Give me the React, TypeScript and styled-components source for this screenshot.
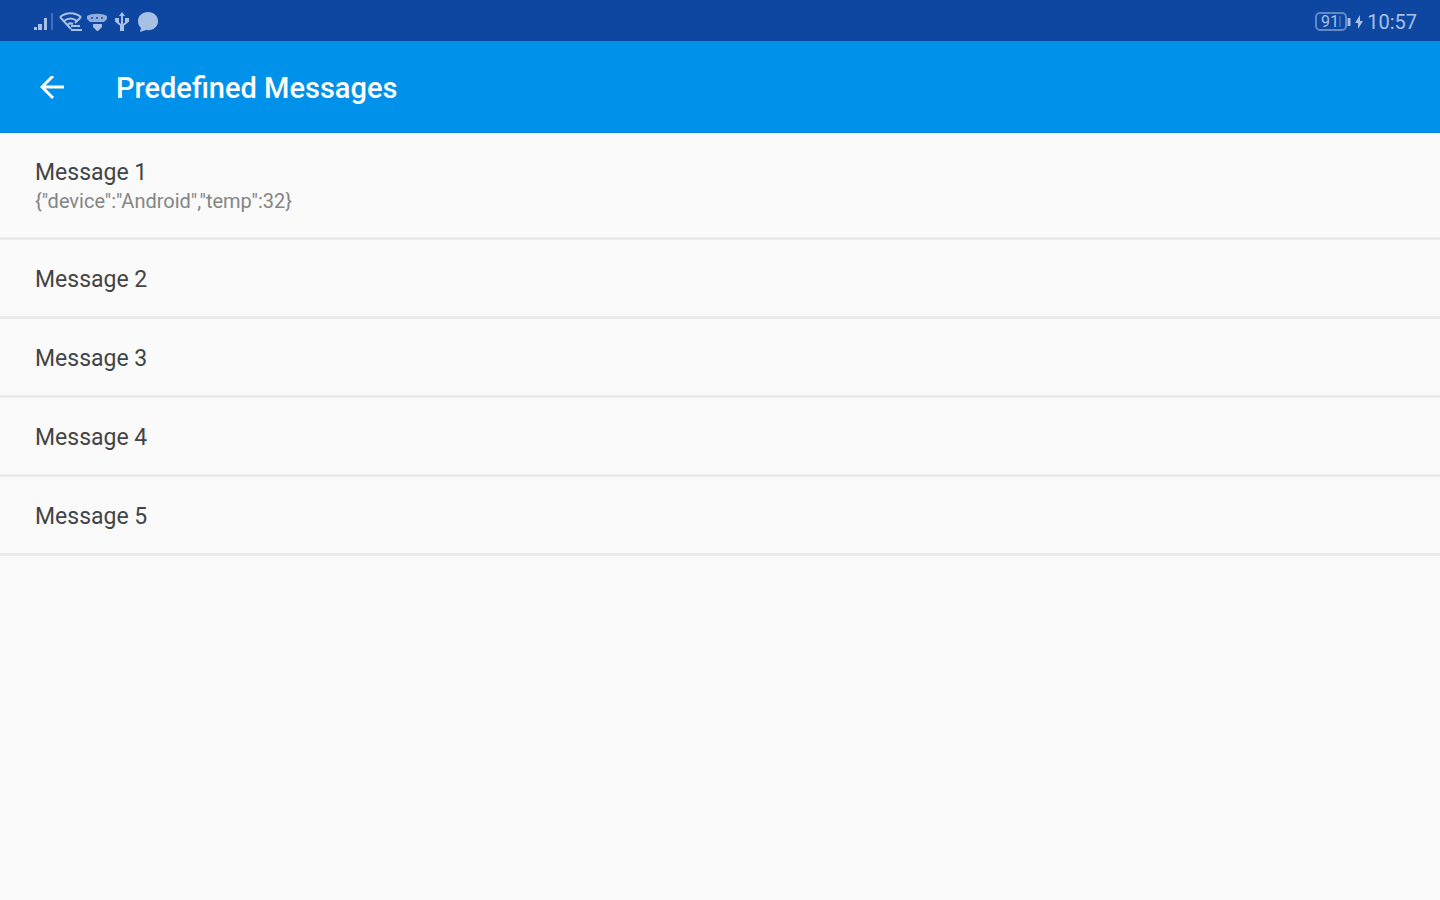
import React from "react";
import styled, { createGlobalStyle } from "styled-components";

const GlobalStyle = createGlobalStyle`
  *, *::before, *::after { box-sizing: border-box; }
  body {
    margin: 0;
    background: #fafafa;
    font-family: Roboto, "Liberation Sans", sans-serif;
  }
`;

const Screen = styled.div`
  min-height: 100vh;
  display: flex;
  flex-direction: column;
  background: #fafafa;
`;

const StatusBar = styled.div`
  height: 41px;
  padding: 2px 23px 0 34px;
  display: flex;
  align-items: center;
  justify-content: space-between;
  background: #0d47a1;
  color: #a9c0e6;
`;

const StatusGroup = styled.div`
  display: flex;
  align-items: center;
  gap: 4px;

  svg { display: block; }
`;

const Clock = styled.time`
  font-size: 20px;
  line-height: 24px;
`;

const AppBar = styled.header`
  height: 92px;
  padding: 2px 32px 0;
  display: flex;
  align-items: center;
  gap: 44px;
  background: #0091ea;
  border-bottom: 1px solid #0687d8;
  color: #fff;
`;

const BackButton = styled.button`
  width: 40px;
  height: 40px;
  padding: 0;
  display: grid;
  place-items: center;
  border: 0;
  background: none;
  color: inherit;
  cursor: pointer;
`;

const Title = styled.h1`
  margin: 0;
  font-size: 29px;
  line-height: 36px;
  font-weight: 500;
`;

const MessageList = styled.ul`
  margin: 0;
  padding: 0;
  list-style: none;
`;

const MessageItem = styled.li`
  border-bottom: 3px solid #ebebeb;
`;

const MessageButton = styled.button`
  width: 100%;
  padding: 26px 35px 22px;
  display: flex;
  flex-direction: column;
  border: 0;
  background: none;
  font-family: inherit;
  text-align: left;
  cursor: pointer;
`;

const MessageName = styled.span`
  color: #444;
  font-size: 23px;
  line-height: 28px;
`;

const MessageBody = styled.span`
  color: #858585;
  font-size: 20px;
  line-height: 28px;
`;

const messages = [
  { name: "Message 1", body: '{"device":"Android","temp":32}' },
  { name: "Message 2" },
  { name: "Message 3" },
  { name: "Message 4" },
  { name: "Message 5" },
];

const SignalIcon = () => (
  <svg width="20" height="18" viewBox="0 0 20 18" fill="currentColor" aria-hidden="true">
    <path d="M0 14h3v3H0zM4 11h4v6H4zM10 5h3v12h-3z" />
    <path d="M17 0h2v17h-2z" opacity=".35" />
  </svg>
);

const WifiIcon = () => (
  <svg width="24" height="20" viewBox="0 0 24 20" fill="none" stroke="currentColor" strokeWidth="2" aria-hidden="true">
    <path d="M2 5c6-5 15-5 21 0M6 9c4-3 9-3 13 0M2 5l11 12M23 5l-6 6M10 12c2-1 3-1 5 0" />
    <path d="M13 14h9M13 18h11" />
  </svg>
);

const HotspotIcon = () => (
  <svg width="22" height="20" viewBox="0 0 22 20" fill="currentColor" aria-hidden="true">
    <path d="M1 4c5-3 15-3 20 0v3l-3 3H4L1 7z" opacity=".85" />
    <path d="M5 5h2v2H5zM10 5h2v2h-2zM15 5h2v2h-2z" fill="#0d47a1" opacity=".7" />
    <path d="M7 12h9v3l-4 4h-1l-4-4z" />
  </svg>
);

const UsbIcon = () => (
  <svg width="20" height="20" viewBox="0 0 20 20" fill="none" stroke="currentColor" strokeWidth="2" aria-hidden="true">
    <path d="M10 3v14M5 8v2l5 4 5-4V8" />
    <path d="M7 4l3-4 3 4zM3 6h4v4H3zM13 6h4v4h-4zM8 12h4v7H8z" fill="currentColor" stroke="none" />
  </svg>
);

const ChatIcon = () => (
  <svg width="22" height="20" viewBox="0 0 22 20" fill="currentColor" aria-hidden="true">
    <path d="M12 0C6 0 2 4 2 9c0 3 1 5 3 7l-1 4 6-2c7 1 12-3 12-9 0-5-4-9-10-9z" />
  </svg>
);

const BatteryIcon = () => (
  <svg width="36" height="20" viewBox="0 0 36 20" fill="none" stroke="currentColor" role="img" aria-label="Battery 91%, charging">
    <rect x="1" y="1" width="30" height="17" rx="4" strokeWidth="2" opacity=".55" />
    <path d="M34 6v8" strokeWidth="3" />
    <path d="M25 4v11" strokeWidth="1" opacity=".6" />
    <text x="6" y="15" fill="currentColor" stroke="none" fontSize="16" fontFamily="Roboto, sans-serif">91</text>
  </svg>
);

const BoltIcon = () => (
  <svg width="8" height="14" viewBox="0 0 8 14" fill="currentColor" aria-hidden="true">
    <path d="M5 0L0 8h3v6l5-8H5z" />
  </svg>
);

const BackIcon = () => (
  <svg width="24" height="24" viewBox="0 0 24 24" fill="none" stroke="currentColor" strokeWidth="3" aria-hidden="true">
    <path d="M24 11H2M13 0L2 11l11 11" />
  </svg>
);

export default function App() {
  return (
    <Screen>
      <GlobalStyle />
      <StatusBar>
        <StatusGroup>
          <SignalIcon />
          <WifiIcon />
          <HotspotIcon />
          <UsbIcon />
          <ChatIcon />
        </StatusGroup>
        <StatusGroup>
          <BatteryIcon />
          <BoltIcon />
          <Clock>10:57</Clock>
        </StatusGroup>
      </StatusBar>
      <AppBar>
        <BackButton type="button" aria-label="Back">
          <BackIcon />
        </BackButton>
        <Title>Predefined Messages</Title>
      </AppBar>
      <main>
        <MessageList>
          {messages.map(({ name, body }) => (
            <MessageItem key={name}>
              <MessageButton type="button">
                <MessageName>{name}</MessageName>
                {body && <MessageBody>{body}</MessageBody>}
              </MessageButton>
            </MessageItem>
          ))}
        </MessageList>
      </main>
    </Screen>
  );
}
